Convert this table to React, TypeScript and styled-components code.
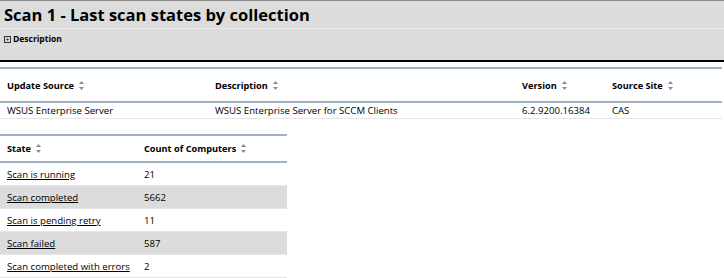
import React from 'react'
import styled, { createGlobalStyle } from 'styled-components'

const GlobalStyle = createGlobalStyle`
  body {
    margin: 0;
    background: #ffffff;
    font-family: 'Open Sans', 'Noto Sans', sans-serif;
    color: #000;
  }
`

const Page = styled.div`
  width: 724px;
  height: 278px;
  overflow: hidden;
  border-top: 1px solid #8c8c8c;
  box-sizing: border-box;
`

const ReportHeader = styled.div`
  background: #dcdcdc;
  border-bottom: 2px solid #000;
`

const Title = styled.h1`
  margin: 0;
  height: 27px;
  padding: 0 0 0 4px;
  font-size: 16.5px;
  font-weight: 700;
  line-height: 27px;
  border-bottom: 1px solid #e9e9e9;
`

const DescriptionRow = styled.div`
  height: 31px;
  padding: 4px 0 0 4px;
  box-sizing: border-box;
  display: flex;
  align-items: flex-start;
  gap: 2px;
  font-size: 8.5px;
  font-weight: 700;
  line-height: 12px;
`

const ExpandBox = styled.span`
  display: inline-flex;
  width: 5px;
  height: 5px;
  margin-top: 3px;
  border: 1px solid #333;
  align-items: center;
  justify-content: center;
  font-size: 7px;
  line-height: 5px;
  font-weight: 400;
`

const Table = styled.table<{ $width: number }>`
  width: ${(p) => p.$width}px;
  table-layout: fixed;
  border-collapse: collapse;
  font-size: 9.6px;
  border-top: 2px solid #9eb0c2;
`

const HeadCell = styled.th<{ $width?: number; $height: number }>`
  text-align: left;
  font-weight: 700;
  font-size: 9.2px;
  height: ${(p) => p.$height}px;
  padding: 0 0 0 7px;
  width: ${(p) => (p.$width ? `${p.$width}px` : 'auto')};
  border-bottom: 2px solid #9eb0c2;
  white-space: nowrap;
`

const Cell = styled.td<{ $shade?: boolean; $height: number }>`
  height: ${(p) => p.$height}px;
  padding: 0 0 0 7px;
  background: ${(p) => (p.$shade ? '#dcdcdc' : '#fff')};
  border-bottom: 1px solid #e6e6e6;
  white-space: nowrap;
`

const StateLink = styled.a`
  color: #000;
  text-decoration: underline;
`

const Gap = styled.div<{ $h: number }>`
  height: ${(p) => p.$h}px;
`

const SortIcon = () => (
  <svg width="5" height="9" viewBox="0 0 5 9" style={{ marginLeft: 5, verticalAlign: -1 }}>
    <path d="M2.5 0 L5 3 L0 3 Z" fill="#8a8a8a" />
    <path d="M2.5 9 L5 6 L0 6 Z" fill="#8a8a8a" />
  </svg>
)

const sources = [
  {
    source: 'WSUS Enterprise Server',
    description: 'WSUS Enterprise Server for SCCM Clients',
    version: '6.2.9200.16384',
    site: 'CAS'
  }
]

const states = [
  { state: 'Scan is running', count: 21 },
  { state: 'Scan completed', count: 5662 },
  { state: 'Scan is pending retry', count: 11 },
  { state: 'Scan failed', count: 587 },
  { state: 'Scan completed with errors', count: 2 }
]

const App: React.FC = () => {
  return (
    <Page>
      <GlobalStyle />
      <ReportHeader>
        <Title>Scan 1 - Last scan states by collection</Title>
        <DescriptionRow>
          <ExpandBox>+</ExpandBox>
          Description
        </DescriptionRow>
      </ReportHeader>
      <Gap $h={5} />
      <Table $width={722}>
        <thead>
          <tr>
            <HeadCell $width={201} $height={32}>
              Update Source
              <SortIcon />
            </HeadCell>
            <HeadCell $width={300} $height={32}>
              Description
              <SortIcon />
            </HeadCell>
            <HeadCell $width={83} $height={32}>
              Version
              <SortIcon />
            </HeadCell>
            <HeadCell $height={32}>
              Source Site
              <SortIcon />
            </HeadCell>
          </tr>
        </thead>
        <tbody>
          {sources.map((row, idx) => (
            <tr key={idx}>
              <Cell $height={15}>{row.source}</Cell>
              <Cell $height={15}>{row.description}</Cell>
              <Cell $height={15}>{row.version}</Cell>
              <Cell $height={15}>{row.site}</Cell>
            </tr>
          ))}
        </tbody>
      </Table>
      <Gap $h={15} />
      <Table $width={287}>
        <thead>
          <tr>
            <HeadCell $width={130} $height={25}>
              State
              <SortIcon />
            </HeadCell>
            <HeadCell $height={25}>
              Count of Computers
              <SortIcon />
            </HeadCell>
          </tr>
        </thead>
        <tbody>
          {states.map((row, idx) => (
            <tr key={idx}>
              <Cell $height={22} $shade={idx % 2 === 1}>
                <StateLink href="#">{row.state}</StateLink>
              </Cell>
              <Cell $height={22} $shade={idx % 2 === 1}>
                {row.count}
              </Cell>
            </tr>
          ))}
        </tbody>
      </Table>
    </Page>
  )
}

export default App
